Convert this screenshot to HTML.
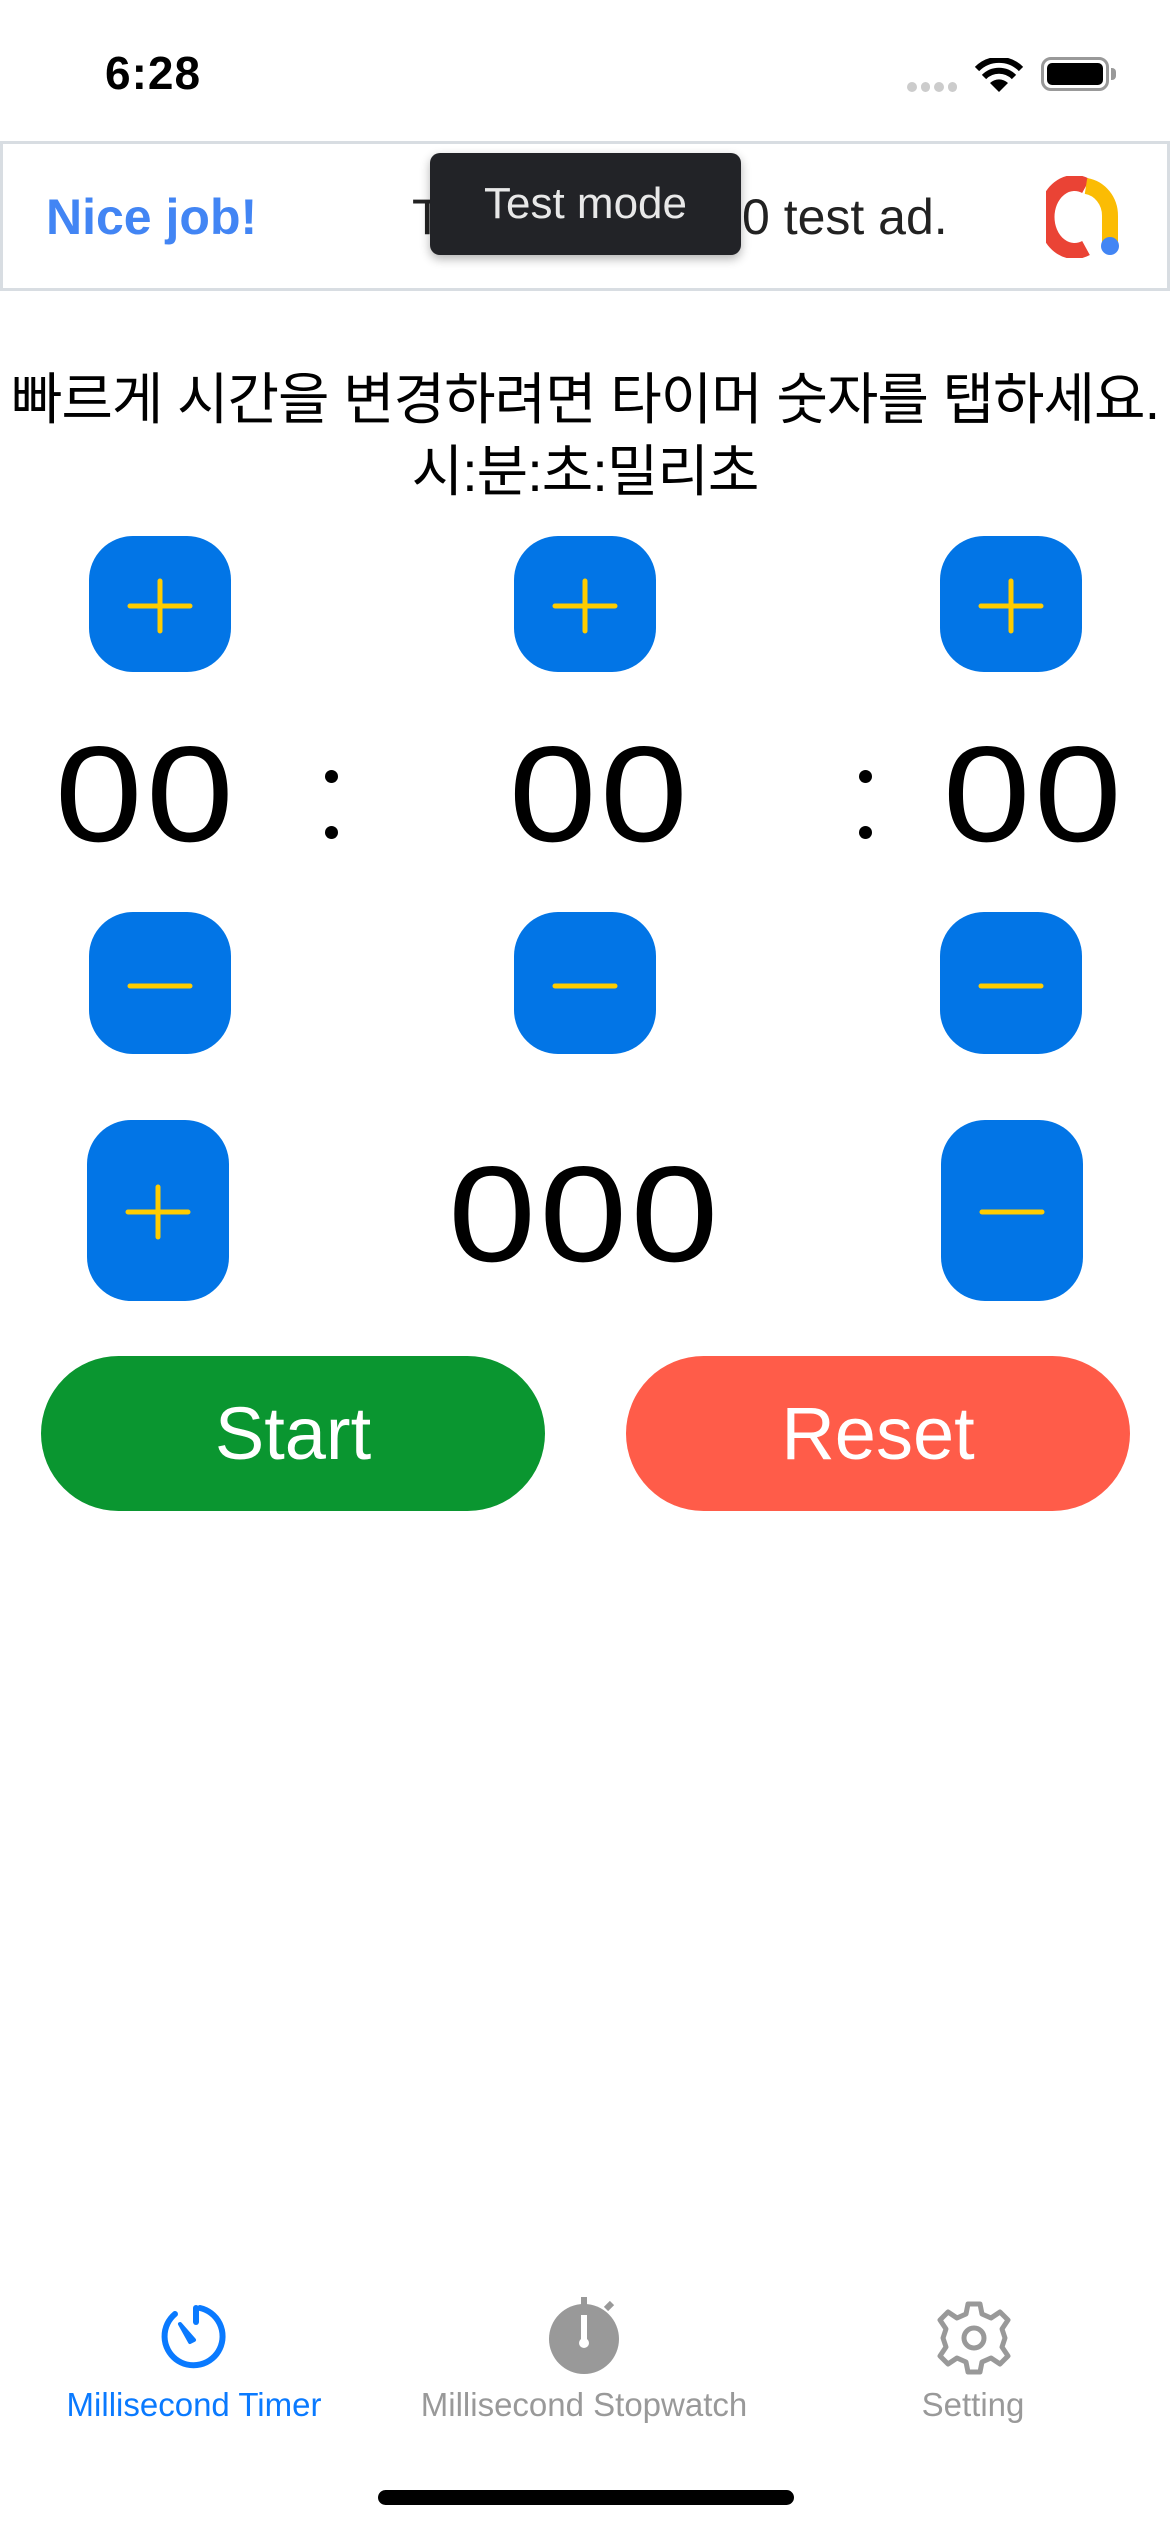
<!DOCTYPE html>
<html><head><meta charset="utf-8"><style>
*{margin:0;padding:0;box-sizing:border-box}
body{width:1170px;height:2532px;background:#fff;position:relative;overflow:hidden;font-family:"Liberation Sans","Noto Sans CJK KR",sans-serif}
.a{position:absolute}
.btn{position:absolute;width:142px;height:136px;background:#0275E6;border-radius:44px}
.btn svg{position:absolute;left:0;top:0}
.num{position:absolute;font-size:136px;line-height:1;color:#000;text-align:center;letter-spacing:3px;transform:scaleX(1.16)}
.big{position:absolute;height:155px;border-radius:78px;color:#fff;font-size:74px;display:flex;align-items:center;justify-content:center}
.tab{position:absolute;font-size:33px;text-align:center;width:420px;top:2386px}
</style></head><body>
<div class="a" style="left:105px;top:46px;font-size:46px;font-weight:bold;letter-spacing:1px">6:28</div>
<div class="a" style="left:907px;top:82px;width:50px;height:10px;display:flex;gap:4px">
<span style="width:10px;height:10px;border-radius:5px;background:#ccc"></span><span style="width:10px;height:10px;border-radius:5px;background:#ccc"></span><span style="width:10px;height:10px;border-radius:5px;background:#ccc"></span><span style="width:10px;height:10px;border-radius:5px;background:#ccc"></span></div>
<svg class="a" style="left:974px;top:58px" width="50" height="34" viewBox="0 0 50 34"><path d="M25 34 L16 25 A13 13 0 0 1 34 25Z" fill="#000"/><path d="M10 19 A21 21 0 0 1 40 19" stroke="#000" stroke-width="6" fill="none"/><path d="M3 11 A31 31 0 0 1 47 11" stroke="#000" stroke-width="6" fill="none"/></svg>
<div class="a" style="left:1041px;top:57px;width:68px;height:34px;border:3px solid #999;border-radius:10px;padding:3px"><div style="width:100%;height:100%;background:#000;border-radius:5px"></div></div>
<div class="a" style="left:1111px;top:68px;width:5px;height:12px;background:#999;border-radius:0 4px 4px 0"></div>

<div class="a" style="left:0;top:141px;width:1170px;height:150px;border:3px solid #d8dde2;background:#fff"></div>
<div class="a" style="left:46px;top:188px;font-size:50px;color:#4285f4;font-weight:bold">Nice job!</div>
<div class="a" style="left:412px;top:188px;font-size:50px;color:#222">T</div>
<div class="a" style="left:742px;top:188px;font-size:50px;color:#222">0 test ad.</div>
<div class="a" style="left:430px;top:153px;width:311px;height:102px;background:#222327;border-radius:10px;color:#e8e8e8;font-size:44px;display:flex;align-items:center;justify-content:center;box-shadow:0 4px 10px rgba(0,0,0,.3)">Test mode</div>
<svg class="a" style="left:1046px;top:176px" width="80" height="82" viewBox="0 0 80 82"><path d="M40 10 A28 34 0 1 0 40 72" stroke="#ea4335" stroke-width="16" fill="none"/><path d="M40 10 A28 30 0 0 1 64 40 L64 70" stroke="#fbbc04" stroke-width="16" fill="none"/><circle cx="64" cy="70" r="9" fill="#4285f4"/></svg>

<div class="a" style="left:0;top:364px;width:1170px;text-align:center;font-size:56px;line-height:72px;white-space:nowrap;letter-spacing:-1px">빠르게 시간을 변경하려면 타이머 숫자를 탭하세요.<br>시:분:초:밀리초</div>

<div class="btn" style="left:89px;top:536px"><svg width="142" height="136"><path d="M71 45v50M41 70h60" stroke="#FFCC00" stroke-width="5" stroke-linecap="round"/></svg></div>
<div class="btn" style="left:514px;top:536px"><svg width="142" height="136"><path d="M71 45v50M41 70h60" stroke="#FFCC00" stroke-width="5" stroke-linecap="round"/></svg></div>
<div class="btn" style="left:940px;top:536px"><svg width="142" height="136"><path d="M71 45v50M41 70h60" stroke="#FFCC00" stroke-width="5" stroke-linecap="round"/></svg></div>

<div class="num" style="left:46px;top:726px;width:200px">00</div>
<div class="num" style="left:500px;top:726px;width:200px">00</div>
<div class="num" style="left:934px;top:726px;width:200px">00</div>
<div class="a" style="left:325px;top:770px;width:13px;height:13px;border-radius:7px;background:#000"></div>
<div class="a" style="left:325px;top:826px;width:13px;height:13px;border-radius:7px;background:#000"></div>
<div class="a" style="left:859px;top:770px;width:13px;height:13px;border-radius:7px;background:#000"></div>
<div class="a" style="left:859px;top:826px;width:13px;height:13px;border-radius:7px;background:#000"></div>

<div class="btn" style="left:89px;top:912px;height:142px"><svg width="142" height="142"><path d="M41 74h60" stroke="#FFCC00" stroke-width="5" stroke-linecap="round"/></svg></div>
<div class="btn" style="left:514px;top:912px;height:142px"><svg width="142" height="142"><path d="M41 74h60" stroke="#FFCC00" stroke-width="5" stroke-linecap="round"/></svg></div>
<div class="btn" style="left:940px;top:912px;height:142px"><svg width="142" height="142"><path d="M41 74h60" stroke="#FFCC00" stroke-width="5" stroke-linecap="round"/></svg></div>

<div class="btn" style="left:87px;top:1120px;height:181px"><svg width="142" height="181"><path d="M71 67v50M41 92h60" stroke="#FFCC00" stroke-width="5" stroke-linecap="round"/></svg></div>
<div class="num" style="left:400px;top:1146px;width:370px">000</div>
<div class="btn" style="left:941px;top:1120px;height:181px"><svg width="142" height="181"><path d="M41 92h60" stroke="#FFCC00" stroke-width="5" stroke-linecap="round"/></svg></div>

<div class="big" style="left:41px;top:1356px;width:504px;background:#0A9630">Start</div>
<div class="big" style="left:626px;top:1356px;width:504px;background:#FF5C49">Reset</div>

<svg class="a" style="left:158px;top:2300px" width="72" height="72" viewBox="0 0 72 72"><path d="M42 8 A29 29 0 1 1 17 14" stroke="#0a7aff" stroke-width="6" fill="none" stroke-linecap="round"/><path d="M38 8v14" stroke="#0a7aff" stroke-width="6" stroke-linecap="round"/><path d="M22 24 L36 40 L32 42Z" fill="#0a7aff" stroke="#0a7aff" stroke-width="4" stroke-linejoin="round"/></svg>
<div class="tab" style="left:-16px;color:#0a7aff">Millisecond Timer</div>
<svg class="a" style="left:548px;top:2295px" width="72" height="80" viewBox="0 0 72 80"><circle cx="36" cy="44" r="35" fill="#999"/><rect x="33" y="2" width="6" height="10" fill="#999"/><path d="M58 14 l6 -6" stroke="#999" stroke-width="6"/><rect x="33" y="20" width="6" height="26" fill="#fff"/><circle cx="36" cy="48" r="5" fill="#fff"/></svg>
<div class="tab" style="left:374px;color:#999">Millisecond Stopwatch</div>
<svg class="a" style="left:936px;top:2300px" width="76" height="76" viewBox="-38 -38 76 76"><g fill="none" stroke="#999" stroke-width="5" stroke-linejoin="round"><path d="M-6 -34 L6 -34 L8 -24 L17 -20 L26 -26 L34 -18 L28 -9 L31 0 L28 9 L34 18 L26 26 L17 20 L8 24 L6 34 L-6 34 L-8 24 L-17 20 L-26 26 L-34 18 L-28 9 L-31 0 L-28 -9 L-34 -18 L-26 -26 L-17 -20 L-8 -24Z"/><circle r="10"/></g></svg>
<div class="tab" style="left:763px;color:#999">Setting</div>

<div class="a" style="left:378px;top:2490px;width:416px;height:15px;border-radius:8px;background:#000"></div>
</body></html>
